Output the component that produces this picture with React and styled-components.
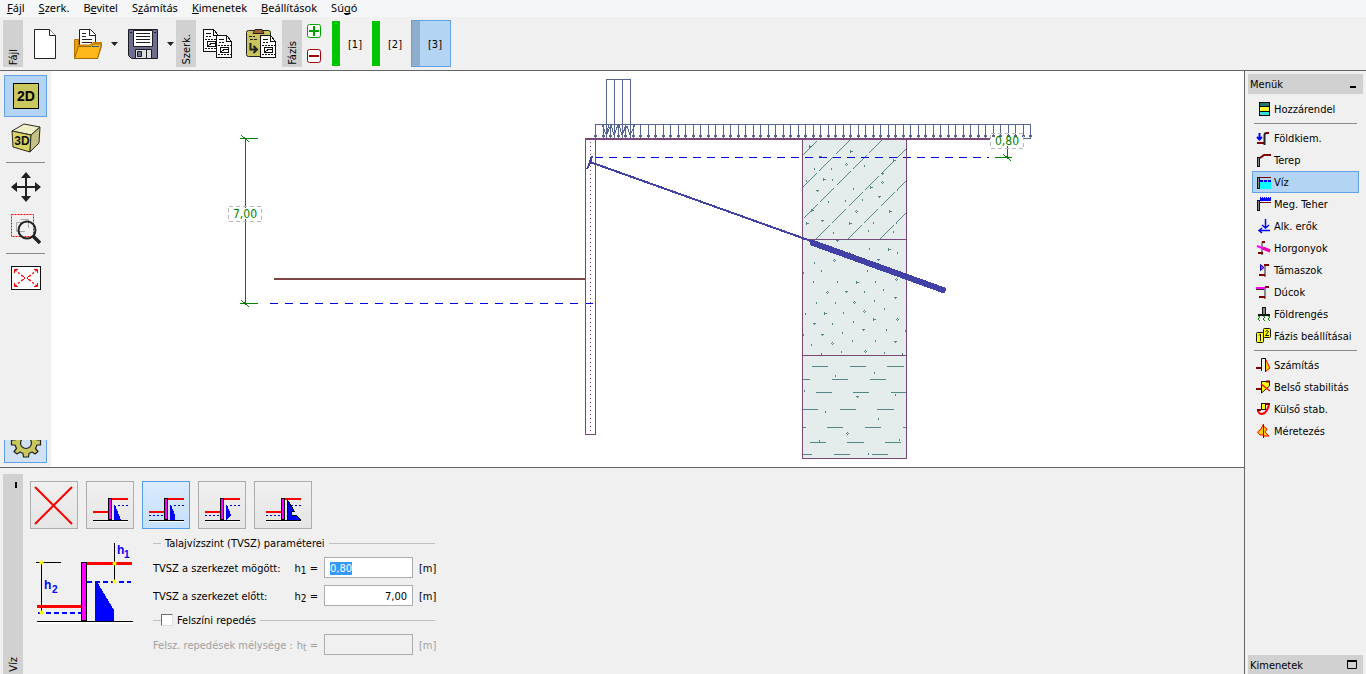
import React, { useEffect, useRef } from "react";
import styled, { createGlobalStyle, css } from "styled-components";

const c = {
  face: "#f0f0f0",
  strip: "#d1d1d1",
  line: "#646464",
  accent: "#b3d4f3",
  accentBorder: "#62a2e4",
  soil: "#e4edec",
  hatch: "#558686",
  purple: "#7b4678",
  load: "#566592",
  anchor: "#4040a6",
  water: "#0000e6",
  dim: "#008000",
};

const uiFont = `"DejaVu Sans Condensed", "Noto Sans", sans-serif`;

const GlobalStyle = createGlobalStyle`
  *, *::before, *::after { box-sizing: border-box; }
  body { margin: 0; font: 11px/14px ${uiFont}; color: #000; background: ${c.face}; }
  button, input { font: inherit; color: inherit; }
  svg { display: block; flex: none; }
`;

const Window = styled.div`
  display: flex;
  flex-direction: column;
  min-height: 100vh;
`;

const Caption = styled.span`
  padding-top: 2px;
`;

const MenuBar = styled.nav`
  display: flex;
  gap: 14px;
  height: 17px;
  padding: 0 7px;
  background: #f5f6f8;
  font: 11px/16px "Noto Sans", "Open Sans", sans-serif;
`;

const MenuLink = styled.a`
  color: #000;
  text-decoration: none;
  u {
    text-decoration-thickness: 1px;
    text-underline-offset: 1px;
    text-decoration-skip-ink: none;
  }
`;

const Toolbar = styled.header`
  display: flex;
  height: 54px;
  padding: 3px;
  border-bottom: 1px solid ${c.line};
`;

const StripLabel = styled.span`
  writing-mode: vertical-rl;
  transform: rotate(180deg);
  line-height: 18px;
  padding-top: 2px;
`;

const Strip = styled.div`
  display: flex;
  flex: none;
  flex-direction: column;
  align-items: flex-end;
  justify-content: flex-end;
  width: 20px;
  background: ${c.strip};
`;

const PlainButton = styled.button`
  display: flex;
  flex: none;
  align-items: center;
  justify-content: center;
  padding: 0;
  border: 0;
  background: none;
`;

const ToolButton = styled(PlainButton)`
  width: ${(p) => p.$width || 44}px;
`;

const PhaseEdit = styled.div`
  display: flex;
  flex-direction: column;
  align-items: center;
  justify-content: space-between;
  width: 24px;
  margin-right: 5px;
  padding: 4px 0;
`;

const Phase = styled.button`
  display: flex;
  align-items: stretch;
  width: 40px;
  padding: 0;
  border: 1px solid ${(p) => (p.$active ? c.accentBorder : "transparent")};
  background: ${(p) => (p.$active ? c.accent : "none")};
  &::before {
    content: "";
    width: 8px;
    background: ${(p) => (p.$active ? "#8faecd" : "#00c400")};
  }
`;

const PhaseName = styled(Caption)`
  flex: 1;
  align-self: center;
  text-align: center;
`;

const Body = styled.div`
  display: flex;
  flex: 1;
`;

const Workspace = styled.main`
  display: flex;
  flex: 1;
  flex-direction: column;
  min-width: 0;
`;

const ViewRow = styled.section`
  display: flex;
  flex: 1;
  min-height: 0;
`;

const ViewTools = styled.div`
  display: flex;
  flex: none;
  flex-direction: column;
  width: 51px;
  padding: 4px;
`;

const ViewButton = styled(PlainButton)`
  width: 43px;
  height: 42px;
  ${(p) =>
    p.$active &&
    css`
      border: 1px solid ${c.accentBorder};
      background: ${c.accent};
    `}
`;

const SettingsButton = styled(PlainButton)`
  align-items: flex-end;
  width: 43px;
  height: 23px;
  margin-top: auto;
  padding-bottom: 4px;
  overflow: hidden;
  border: 1px solid ${c.accentBorder};
  border-top: 0;
  background: #d0e1f3;
`;

const Rule = styled.hr`
  width: auto;
  height: 1px;
  margin: 3px 2px;
  border: 0;
  background: #8a8a8a;
`;

const Canvas = styled.div`
  display: flex;
  flex: 1;
  min-width: 0;
  background: #fff;
  svg { width: 100%; }
`;

const Panel = styled.section`
  display: flex;
  flex: none;
  gap: 7px;
  height: 207px;
  padding: 6px 3px 0;
  border-top: 1px solid ${c.line};
`;

const PanelStrip = styled(Strip)`
  justify-content: space-between;
  padding-top: 8px;
  &::before {
    content: "";
    width: 2px;
    height: 6px;
    margin-right: 6px;
    background: #000;
  }
`;

const PanelBody = styled.div`
  display: flex;
  flex-direction: column;
  gap: 7px;
  padding-top: 7px;
`;

const TypeRow = styled.div`
  display: flex;
  gap: 8px;
`;

const TypeButton = styled.button`
  display: flex;
  align-items: center;
  justify-content: center;
  width: ${(p) => (p.$wide ? 58 : 48)}px;
  height: 48px;
  padding: 0;
  border: 1px solid ${(p) => (p.$active ? "#569de5" : "#adadad")};
  background: ${(p) =>
    p.$active
      ? "linear-gradient(#daebfc, #c4e0fc)"
      : "linear-gradient(#f0f0f0, #e5e5e5)"};
`;

const Details = styled.div`
  display: flex;
  gap: 19px;
  padding-left: 6px;
`;

const Form = styled.form`
  display: flex;
  flex-direction: column;
  gap: 7px;
  width: 282px;
`;

const GroupTitle = styled.div`
  display: flex;
  align-items: center;
  gap: 4px;
  height: 14px;
  white-space: nowrap;
  &::before, &::after {
    content: "";
    height: 1px;
    background: #c0c0c0;
  }
  &::before { width: 8px; }
  &::after { flex: 1; }
`;

const CrackToggle = styled.label`
  display: flex;
  align-items: center;
  gap: 4px;
  margin-left: -4px;
`;

const CheckBox = styled.input`
  appearance: none;
  width: 12px;
  height: 12px;
  margin: 0;
  border: 1px solid;
  border-color: #6e6e6e #e0e0e0 #e0e0e0 #6e6e6e;
  background: #fff;
`;

const Field = styled.div`
  display: flex;
  align-items: center;
  height: 21px;
  color: ${(p) => (p.$muted ? "#a0a0a0" : "#000")};
`;

const FieldLabel = styled.label`
  display: flex;
  flex: none;
  justify-content: space-between;
  width: 165px;
  margin-right: 6px;
  padding-top: 2px;
  white-space: nowrap;
`;

const Sub = styled.sub`
  font-size: 10px;
  line-height: 1px;
  vertical-align: -2px;
`;

const NumberBox = styled.input`
  flex: none;
  width: 89px;
  height: 21px;
  margin-right: 6px;
  padding: 1px 5px 0;
  border: 1px solid #abadb3;
  border-radius: 0;
  outline: 0;
  background: ${(p) => (p.disabled ? "#f0f0f0" : "#fff")};
  text-align: ${(p) => (p.$align || "right")};
  &::selection { background: #3399ff; color: #fff; }
`;

const Sidebar = styled.aside`
  display: flex;
  flex: none;
  flex-direction: column;
  width: 122px;
  padding: 3px 3px 0;
  border-left: 1px solid ${c.line};
`;

const SideHeader = styled.h2`
  display: flex;
  align-items: center;
  justify-content: space-between;
  height: 20px;
  margin: 0;
  padding: 0 6px 0 2px;
  background: ${c.strip};
  font: inherit;
`;

const SideFooter = styled(SideHeader)`
  height: 19px;
  margin-top: auto;
`;

const SideList = styled.div`
  display: flex;
  flex-direction: column;
  padding: 4px;
`;

const SideItem = styled.button`
  display: flex;
  align-items: center;
  gap: 2px;
  height: 22px;
  padding: 0 3px;
  border: 1px solid ${(p) => (p.$active ? c.accentBorder : "transparent")};
  background: ${(p) => (p.$active ? c.accent : "none")};
  white-space: nowrap;
`;

/* ---------- toolbar icons ---------- */

const PageIcon = () => (
  <svg width="24" height="32" viewBox="0 0 24 32" fill="#fff" stroke="#222">
    <path d="M1.5 1.5H16.500L22.500 7.500V30.500H1.500Z" />
    <path d="M16.500 1.500V7.500H22.500" />
  </svg>
);

const OpenIcon = () => (
  <svg width="30" height="32" viewBox="0 0 30 32" stroke="#222">
    <path d="M6.500 22V1.500H17.500L22.500 6.500V22" fill="#fff" />
    <path d="M16.500 1.500V7.500H22.500M9 5.500H13M9 8.500H13M9 11.500H19M9 14.500H19" fill="none" />
    <path d="M1.500 30.500V11.500H5.500V17H17L20 14.500H28.500V18L24.500 30.500Z" fill="#e99f0c" stroke="#b87800" />
    <path d="M1.500 30.500L5.500 18.500H18L20.500 16H28.500L24.500 30.500Z" fill="#ffb81c" stroke="#a06c00" />
    <path d="M19 18.500H26" stroke="#2c5a90" />
  </svg>
);

const SaveIcon = () => (
  <svg width="32" height="32" viewBox="0 0 32 32" stroke="#1c1c24">
    <path d="M1.500 1.500H30.500V30.500H4.500L1.500 27.500Z" fill="#6d6d90" />
    <path d="M6.500 2.500H25.500V18.500H6.500Z" fill="#fff" />
    <path d="M9 5.500H23M9 8.500H23M9 11.500H23M9 14.500H23M3 4.500H5M27 4.500H29" />
    <path d="M8.500 21.500H24.500V30.500H8.500Z" fill="#dedede" />
    <path d="M10.500 23.500H14.500V28.500H10.500Z" fill="#6d6d90" />
    <path d="M19.500 22V30" />
  </svg>
);

const ArrowDown = () => (
  <svg width="7" height="4" viewBox="0 0 7 4">
    <path d="M0 0H7L3.500 4Z" fill="#222" />
  </svg>
);

const Sheet = ({ x, y }) => (
  <g transform={`translate(${x} ${y})`} stroke="#111" fill="none">
    <path d="M.5 .5H10.500L15.500 6.500V22.500H.5Z" fill="#fff" />
    <path d="M10.500 .5V6.500H15.500M3 4.500H8M3 7.500H5M6 7.500H8" />
    <path d="M2 10.500H15M2 19.500H15" strokeDasharray="2 1" />
    <path d="M4.500 12.500H12.500V17.500H4.500ZM5 17L8 14.500H12" />
  </g>
);

const CopyIcon = () => (
  <svg width="32" height="32" viewBox="0 0 32 32" shapeRendering="crispEdges">
    <Sheet x={1} y={1} />
    <Sheet x={14} y={7} />
  </svg>
);

const PasteIcon = () => (
  <svg width="32" height="32" viewBox="0 0 32 32" stroke="#222">
    <rect x="1.500" y="2.500" width="24" height="26" rx="2" fill="#c9c45c" />
    <path d="M8 5.500L10 1.500H17L19 5.500Z" fill="#a06030" />
    <path d="M4 8.500H10M5 11.500H13" strokeDasharray="3 1" fill="none" />
    <path d="M5.500 15V21.500H11M8.500 18L12 21.500L8.500 25" fill="none" strokeWidth="2" />
    <g shapeRendering="crispEdges"><Sheet x={15} y={7} /></g>
  </svg>
);

const SignIcon = ({ plus }) => {
  const color = plus ? "#00a000" : "#a00010";
  return (
    <svg width="14" height="14" viewBox="0 0 14 14" fill="none" stroke={color}>
      <rect x=".5" y=".5" width="13" height="13" rx="2" fill="#fff" />
      <path d={plus ? "M2 7H12M7 2V12" : "M2 7H12"} strokeWidth="2" />
    </svg>
  );
};

/* ---------- view icons ---------- */

const boldFont = `"Liberation Sans", Arial, sans-serif`;

const Icon2D = () => (
  <svg width="26" height="26" viewBox="0 0 26 26">
    <rect x=".5" y=".5" width="25" height="25" fill="#c9c75e" stroke="#000" />
    <text x="13" y="18" textAnchor="middle" fontFamily={boldFont} fontWeight="700" fontSize="14">2D</text>
  </svg>
);

const Icon3D = () => (
  <svg width="30" height="30" viewBox="0 0 30 30" stroke="#2a2a20" strokeLinejoin="round">
    <path d="M1 8L13 1L29 4L20 12Z" fill="#eeeec8" />
    <path d="M1 8L20 12L19 29L2 24Z" fill="#d8d564" />
    <path d="M20 12L29 4L28 20L19 29Z" fill="#c4c084" />
    <text x="11" y="22" textAnchor="middle" fontFamily={boldFont} fontWeight="700" fontSize="12" fill="#111" stroke="none">3D</text>
  </svg>
);

const MoveIcon = () => (
  <svg width="30" height="30" viewBox="0 0 30 30" fill="#222">
    <path d="M14 5H16V14H25V16H16V25H14V16H5V14H14Z" />
    <path d="M15 0L20 6H10ZM15 30L10 24H20ZM0 15L6 10V20ZM30 15L24 20V10Z" />
  </svg>
);

const ZoomIcon = () => (
  <svg width="30" height="30" viewBox="0 0 30 30" fill="none">
    <rect x=".5" y=".5" width="22" height="22" stroke="#f00" strokeDasharray="2 1" />
    <path d="M9.500 5.500H17.500V14M5.500 8.500H14M5.500 8.500V17.500H14" stroke="#aaa" />
    <circle cx="16" cy="16" r="8.500" stroke="#222" strokeWidth="2" />
    <path d="M22 22L29 29" stroke="#222" strokeWidth="3.500" />
  </svg>
);

const FitIcon = () => (
  <svg width="30" height="24" viewBox="0 0 30 24" fill="none" stroke="#f00">
    <rect x=".5" y=".5" width="29" height="23" fill="#fff" stroke="#111" />
    <path d="M3.500 7V3.500H7M23 3.500H26.500V7M3.500 17V20.500H7M23 20.500H26.500V17" />
    <path d="M4 4L12 10.500M26 4L18 10.500M4 20L12 13.500M26 20L18 13.500" strokeDasharray="2 2" strokeWidth="1.500" />
    <path d="M12 10L14 12L12 14M18 10L16 12L18 14" />
  </svg>
);

const GearIcon = () => (
  <svg width="32" height="30" viewBox="-16 -15 32 30" stroke="#222" strokeWidth="1.200">
    <path
      fill="#c9c75e"
      strokeLinejoin="round"
      d="M-2.500 -14H2.500L3 -10.500L6.500 -9L9.500 -11.500L12.500 -8L10 -5L11 -3H14.500V2H11L9.500 5.500L12 8.500L9 11L6 9L3 10.500L2.500 14H-2.500L-3 10.500L-6 9L-9 11L-12 8.500L-9.500 5.500L-11 2H-14.500V-3H-11L-10 -5L-12.500 -8L-9.500 -11.500L-6.500 -9L-3 -10.500Z"
    />
    <circle r="5.500" fill="#d0e1f3" />
  </svg>
);

/* ---------- groundwater type icons ---------- */

const NoWaterIcon = () => (
  <svg width="40" height="40" viewBox="0 0 40 40" stroke="#f00" strokeWidth="2">
    <path d="M1 2L38 39M38 2L1 39" />
  </svg>
);

const WaterIcon = ({ shape, front, outlined }) => (
  <svg width="36" height="36" viewBox="-1 1 36 36" shapeRendering="crispEdges">
    <rect x="0" y="35" width="35" height="1" fill="#fff" />
    <rect x="0" y="34" width="35" height="1" fill="#000" />
    <rect x="0" y="25" width="16" height="2" fill="#f00" />
    <rect x="18" y="12" width="17" height="2" fill="#f00" />
    <path d="M25 19.500H35" stroke="#0000c8" strokeDasharray="2 2" />
    {front && <path d="M0 29.500H15" stroke="#0000c8" strokeDasharray="2 2" />}
    <path d={shape} fill="#00f" stroke={outlined ? "#000" : "none"} />
    <rect x="15.500" y="12.500" width="3" height="21" fill="#f0f" stroke="#000" />
  </svg>
);

const waterTypes = [
  { name: "Víz mögött", shape: "M21 19H22L28 34H21Z" },
  { name: "Víz mögött és előtt", shape: "M21 19H22L26 29V34H21Z", front: true, active: true },
  { name: "Áramlás", shape: "M21 19H22L26 29L22 34H21Z", front: true },
  { name: "Egyedi nyomás", shape: "M21.500 14V34H35L30 29H25V25H28L26 21Z", front: true, outlined: true, wide: true },
];

const WaterSketch = () => (
  <svg width="98" height="90" viewBox="36 536 98 90" fontFamily={boldFont} fontWeight="700">
    <g shapeRendering="crispEdges">
      <path d="M37 622V624H133V622Z" fill="#fff" />
      <path d="M36 562.500H61M41.500 562V612M114.500 543V581M37 621.500H133" stroke="#000" />
      <rect x="37" y="605" width="45" height="3" fill="#f00" />
      <rect x="87" y="562" width="45" height="3" fill="#f00" />
      <path d="M38 613H81M87 582H131" stroke="#00f" strokeWidth="2" strokeDasharray="5 3" />
      <path d="M95 582H97L114 610V621H95Z" fill="#00f" />
      <rect x="81.500" y="562.500" width="5" height="58" fill="#f0f" stroke="#000" />
    </g>
    <g fill="#ff0">
      <circle cx="41.500" cy="562.500" r="2" />
      <circle cx="41.500" cy="612.500" r="2" />
      <circle cx="114.500" cy="563.500" r="2" />
      <circle cx="114.500" cy="581.500" r="2" />
    </g>
    <g fill="#00f">
      <text x="117" y="554" fontSize="12">h</text>
      <text x="124" y="558" fontSize="10">1</text>
      <text x="44" y="589" fontSize="12">h</text>
      <text x="52" y="593" fontSize="10">2</text>
    </g>
  </svg>
);

/* ---------- side menu icons ---------- */

const sideIcons = {
  assign: (
    <>
      <rect x="3" y="1" width="11" height="14" fill="#000" />
      <rect x="4" y="2" width="9" height="3" fill="#1d7a74" />
      <rect x="4" y="6" width="9" height="4" fill="#ff3" />
      <rect x="4" y="11" width="9" height="3" fill="#3dd" />
    </>
  ),
  excavation: (
    <>
      <path d="M1 13H9" stroke="#800000" strokeWidth="2" />
      <path d="M8.500 15V5Q8.500 3 11 3" stroke="#222" strokeWidth="2" />
      <path d="M10 3H13" stroke="#800000" strokeWidth="2" />
      <path d="M3.500 3V10M1 7L3.500 9.500L6 7" stroke="#00f" strokeWidth="2" />
    </>
  ),
  terrain: (
    <>
      <rect x="1.500" y="5.500" width="2" height="9" fill="#888" stroke="#111" />
      <path d="M4 6L8 3H15" stroke="#800000" strokeWidth="2" />
    </>
  ),
  water: (
    <>
      <rect x="4" y="6" width="11" height="9" fill="#0ff" />
      <path d="M4 3.500H15" stroke="#800000" />
      <path d="M4 7H15" stroke="#00f" strokeWidth="2" strokeDasharray="3 1" />
      <rect x="1.500" y="3.500" width="2" height="11" fill="#888" stroke="#111" />
    </>
  ),
  surcharge: (
    <>
      <path d="M4 5V1H5V2H6V1H7V2H8V1H9V2H10V1H11V2H12V1H13V2H14V1H15V5Z" fill="#00f" />
      <path d="M4 6.500H15" stroke="#800000" />
      <rect x="1.500" y="4.500" width="2" height="10" fill="#888" stroke="#111" />
    </>
  ),
  forces: (
    <path d="M9.500 1V10M6 7L9.500 10L13 7M14 12.500H3M6 10L3 12.500L6 15" stroke="#00f" strokeWidth="1.500" />
  ),
  anchors: (
    <>
      <path d="M9 2H7Q6 2 6 5V15" stroke="#888" strokeWidth="2" />
      <path d="M6 2H9M2 13H7" stroke="#800000" strokeWidth="2" />
      <path d="M1 6L14 11" stroke="#f0f" strokeWidth="2" />
      <path d="M7 8L14 11" stroke="#e0a" strokeWidth="3" />
    </>
  ),
  supports: (
    <>
      <path d="M9 15V3" stroke="#888" strokeWidth="2" />
      <path d="M8 3H13M3 13H9" stroke="#800000" strokeWidth="2" />
      <path d="M4.500 2.500L8 5.500L4.500 8.500Z" fill="#f0f" stroke="#00c" />
    </>
  ),
  struts: (
    <>
      <path d="M9 15V3" stroke="#888" strokeWidth="2" />
      <path d="M9 3H13M3 13H9" stroke="#800000" strokeWidth="2" />
      <path d="M0 4H9" stroke="#f0f" strokeWidth="2" />
      <path d="M0 5.500H8" stroke="#333" />
    </>
  ),
  quake: (
    <>
      <rect x="6.500" y="1.500" width="3" height="7" fill="#888" stroke="#111" />
      <path d="M2 9H14" stroke="#111" strokeWidth="2" />
      <path d="M2 10L4 11L2 13L4 15M7 10L9 11L7 13L9 15M12 10L14 11L12 13L14 15" stroke="#080" />
    </>
  ),
  stages: (
    <>
      <rect x="7.500" y=".5" width="7" height="9" rx="1" fill="#ff0" stroke="#111" />
      <rect x=".5" y="4.500" width="7" height="10" rx="1" fill="#ff0" stroke="#111" />
      <path d="M3 7.500L4.500 6V13M9.500 3.500Q11 1.500 12.500 3.500L9.500 7.500H13" stroke="#111" />
    </>
  ),
  analysis: (
    <>
      <path d="M5.500 14V1.500H9.500V15" stroke="#111" />
      <path d="M0 11H5" stroke="#800000" strokeWidth="2" />
      <path d="M9.500 2L14 11L9.500 14.500" fill="#fc0" stroke="#f00" />
      <path d="M9.500 1V15" stroke="#111" />
    </>
  ),
  internal: (
    <>
      <path d="M5.500 2.500H13.500V7L5.500 14Z" fill="#ff0" stroke="#111" />
      <path d="M5 5L14 12" stroke="#f00" strokeWidth="1.500" />
      <path d="M0 10H5M10 2.500H14" stroke="#800000" strokeWidth="2" />
    </>
  ),
  external: (
    <>
      <path d="M2 9C2 15 11 15 13 3" stroke="#f00" strokeWidth="2" />
      <path d="M1 9H5M9 3H14" stroke="#800000" strokeWidth="2" />
      <rect x="5.500" y="2.500" width="4" height="6" fill="#ff0" stroke="#111" />
    </>
  ),
  design: (
    <>
      <path d="M7.500 1L5 6L1.500 9L4 12H7.500Z" fill="#fc0" stroke="#f00" />
      <path d="M7.500 3L11 6L9 9L13 13H7.500Z" fill="#fc0" stroke="#f00" />
      <path d="M7.500 2V15" stroke="#a00" />
    </>
  ),
};

const SideIcon = ({ name }) => (
  <svg width="16" height="16" viewBox="0 0 16 16" fill="none">{sideIcons[name]}</svg>
);

const stageItems = [
  ["excavation", "Földkiem."],
  ["terrain", "Terep"],
  ["water", "Víz"],
  ["surcharge", "Meg. Teher"],
  ["forces", "Alk. erők"],
  ["anchors", "Horgonyok"],
  ["supports", "Támaszok"],
  ["struts", "Dúcok"],
  ["quake", "Földrengés"],
  ["stages", "Fázis beállításai"],
];

const analysisItems = [
  ["analysis", "Számítás"],
  ["internal", "Belső stabilitás"],
  ["external", "Külső stab."],
  ["design", "Méretezés"],
];

/* ---------- wall cross-section ---------- */

const soilDiagonals = [
  [803, 155, 819, 139], [803, 187, 851, 139], [804, 218, 883, 139],
  [816, 239, 906, 149], [848, 239, 906, 181], [880, 239, 906, 213],
];
const soilTees = [
  [820, 157], [817, 191], [822, 221], [882, 174], [879, 197], [837, 241], [878, 260],
  [846, 292], [895, 298], [814, 324], [863, 330], [822, 335], [895, 342], [857, 397],
];
const soilForks = [
  [810, 146], [824, 179], [812, 210], [807, 223], [850, 223], [851, 151], [871, 187],
  [890, 211], [894, 160], [889, 249], [857, 282], [825, 313], [874, 319],
];
const soilPebbles = [
  [846, 164], [882, 182], [856, 211], [834, 260], [896, 279], [827, 292],
  [854, 302], [864, 311], [897, 319], [832, 343], [865, 351], [847, 433],
];
const soilTicks = [
  [814, 169], [831, 169], [845, 201], [832, 180], [853, 189], [806, 181], [864, 166],
  [862, 200], [873, 223], [833, 233], [868, 231], [893, 232], [896, 223], [897, 190],
  [828, 202], [869, 249], [849, 253], [897, 253], [814, 263], [803, 273], [821, 271],
  [867, 271], [887, 272], [813, 282], [837, 282], [875, 282], [864, 292], [883, 290],
  [816, 303], [835, 303], [874, 301], [884, 309], [843, 313], [805, 314], [853, 322],
  [832, 324], [886, 330], [842, 333], [905, 331], [852, 341], [875, 341], [811, 345],
  [841, 352], [884, 353], [821, 354], [803, 335], [902, 354], [835, 376], [874, 373],
  [804, 391], [895, 395], [825, 412], [878, 419], [899, 440], [868, 454], [819, 441],
];
const clayDashes = [
  [366, 812, 828], [366, 850, 866], [366, 887, 904],
  [379, 803, 810], [379, 832, 848], [379, 870, 886],
  [392, 816, 832], [392, 853, 869], [392, 891, 906],
  [409, 803, 818], [409, 840, 856], [409, 877, 894],
  [427, 803, 806], [427, 827, 843], [427, 865, 881], [427, 903, 906],
  [442, 810, 826], [442, 847, 864], [442, 885, 901],
  [454, 803, 812], [454, 834, 850], [454, 872, 888],
];

const loadArrows = Array.from({ length: 59 }, (_, i) => Math.round(595 + i * 7.5));

const join = (items, draw) => items.map(draw).join("");

const Slash = ({ x, y }) => (
  <path d={`M${x - 4} ${y - 3}L${x + 4} ${y + 4}`} stroke={c.dim} />
);

const Section = () => (
  <svg viewBox="51 71 1193 396" fill="none" role="img" aria-label="Szerkezet metszete">
    <g shapeRendering="crispEdges">
      <rect x="802" y="138" width="105" height="321" fill={c.soil} />
      <g stroke={c.hatch}>
        <path d={join(soilDiagonals, ([a, b, d, e]) => `M${a} ${b}L${d} ${e}`)} strokeDasharray="20 3" />
        <path d={join(soilTicks, ([x, y]) => `M${x + 0.5} ${y - 1}V${y + 1}`)} />
        <path d={join(soilTees, ([x, y]) => `M${x - 1} ${y - 0.5}H${x + 2}M${x + 0.5} ${y}V${y + 1}`)} />
        <path d={join(soilForks, ([x, y]) => `M${x - 0.5} ${y - 1}V${y + 2}M${x} ${y + 0.5}H${x + 2}`)} />
        <path d={join(soilPebbles, ([x, y]) => `M${x + 1} ${y + 0.5}h1M${x - 1} ${y + 0.5}h1M${x} ${y - 0.5}h1M${x} ${y + 1.5}h1`)} />
        <path d={join(clayDashes, ([y, a, b]) => `M${a} ${y + 0.5}H${b}`)} />
      </g>

      <g stroke={c.load}>
        <path d="M606.500 138V79.500H630.500V138M614.500 79V138M622.500 79V138" />
        <path d="M595.500 138V124.500H1030.500V138.500H990" />
        <path d={join(loadArrows, (x) => `M${x + 0.5} 124V138M${x - 1} 136.500h3M${x - 1} 135.500h3`)} />
        <path d="M602 125L606 134L609 125M606 136L611 125L614 135L618 125M613 135L619 125L622 135L626 125M621 135L627 126L630 135L635 125" />
      </g>

      <path d="M595 157.500H989" stroke={c.water} strokeDasharray="8 6" />
      <path d="M270 303.500H596" stroke={c.water} strokeDasharray="8 7" />
      <rect x="274" y="278" width="312" height="2" fill="#7b4445" />

      <g stroke={c.purple}>
        <path d="M595 138.500H585.500V434.500H595.500V138" />
        <path d="M590.500 142V434" strokeDasharray="1 3" />
        <path d="M585 139H990" strokeWidth="2" />
        <path d="M802.500 139V458.500H906.500V139M802 239.500H906M802 355.500H906" />
      </g>

      <g stroke={c.anchor}>
        <path d="M587 169L589 165L592 156M590 162L811 241" strokeWidth="2" />
        <path d="M813 243L943 290" strokeWidth="6" strokeLinecap="round" />
      </g>

      <g stroke={c.dim}>
        <path d="M245.500 138V304M240 138.500H258M240 303.500H258M1007.500 146V157M995 157.500H1012" />
        <Slash x={245} y={138} />
        <Slash x={245} y={303} />
        <Slash x={1007} y={157} />
      </g>

      <rect x="229" y="208" width="33" height="11" fill="#fff" />
      <rect x="991" y="137" width="32" height="9" fill="#fff" />
      <g stroke="#b8b8b8" strokeDasharray="4 3">
        <rect x="228.500" y="206.500" width="33" height="15" />
        <rect x="990.500" y="133.500" width="33" height="15" />
      </g>
    </g>
    <g fill={c.dim} fontFamily={uiFont} fontSize="12" textAnchor="middle">
      <text x="245" y="218">7,00</text>
      <text x="1007" y="145">0,80</text>
    </g>
  </svg>
);

export default function App() {
  const depth = useRef(null);

  useEffect(() => {
    depth.current.focus();
    depth.current.select();
  }, []);

  return (
    <Window>
      <GlobalStyle />
      <MenuBar>
        <MenuLink href="#"><u>F</u>ájl</MenuLink>
        <MenuLink href="#"><u>S</u>zerk.</MenuLink>
        <MenuLink href="#">B<u>e</u>vitel</MenuLink>
        <MenuLink href="#">S<u>z</u>ámítás</MenuLink>
        <MenuLink href="#"><u>K</u>imenetek</MenuLink>
        <MenuLink href="#"><u>B</u>eállítások</MenuLink>
        <MenuLink href="#">Sú<u>g</u>ó</MenuLink>
      </MenuBar>

      <Toolbar>
        <Strip><StripLabel>Fájl</StripLabel></Strip>
        <ToolButton aria-label="Új"><PageIcon /></ToolButton>
        <ToolButton $width={42} aria-label="Megnyitás"><OpenIcon /></ToolButton>
        <ToolButton $width={11} aria-label="Legutóbbi fájlok"><ArrowDown /></ToolButton>
        <ToolButton $width={45} aria-label="Mentés"><SaveIcon /></ToolButton>
        <ToolButton $width={11} aria-label="Mentés másként"><ArrowDown /></ToolButton>
        <Strip><StripLabel>Szerk.</StripLabel></Strip>
        <ToolButton aria-label="Másolás"><CopyIcon /></ToolButton>
        <ToolButton $width={42} aria-label="Beillesztés"><PasteIcon /></ToolButton>
        <Strip><StripLabel>Fázis</StripLabel></Strip>
        <PhaseEdit>
          <PlainButton aria-label="Fázis hozzáadása"><SignIcon plus /></PlainButton>
          <PlainButton aria-label="Fázis törlése"><SignIcon /></PlainButton>
        </PhaseEdit>
        <Phase><PhaseName>[1]</PhaseName></Phase>
        <Phase><PhaseName>[2]</PhaseName></Phase>
        <Phase $active><PhaseName>[3]</PhaseName></Phase>
      </Toolbar>

      <Body>
        <Workspace>
          <ViewRow>
            <ViewTools>
              <ViewButton $active aria-label="2D nézet"><Icon2D /></ViewButton>
              <ViewButton aria-label="3D nézet"><Icon3D /></ViewButton>
              <Rule />
              <ViewButton aria-label="Mozgatás"><MoveIcon /></ViewButton>
              <ViewButton aria-label="Nagyítás"><ZoomIcon /></ViewButton>
              <Rule />
              <ViewButton aria-label="Teljes nézet"><FitIcon /></ViewButton>
              <SettingsButton aria-label="Rajz beállításai"><GearIcon /></SettingsButton>
            </ViewTools>
            <Canvas><Section /></Canvas>
          </ViewRow>

          <Panel>
            <PanelStrip><StripLabel>Víz</StripLabel></PanelStrip>
            <PanelBody>
              <TypeRow>
                <TypeButton aria-label="Nincs víz"><NoWaterIcon /></TypeButton>
                {waterTypes.map((t) => (
                  <TypeButton key={t.name} aria-label={t.name} $active={t.active} $wide={t.wide}>
                    <WaterIcon shape={t.shape} front={t.front} outlined={t.outlined} />
                  </TypeButton>
                ))}
              </TypeRow>
              <Details>
                <WaterSketch />
                <Form>
                  <GroupTitle><Caption>Talajvízszint (TVSZ) paraméterei</Caption></GroupTitle>
                  <Field>
                    <FieldLabel htmlFor="h1">
                      <span>TVSZ a szerkezet mögött:</span>
                      <span>h<Sub>1</Sub> =</span>
                    </FieldLabel>
                    <NumberBox id="h1" ref={depth} defaultValue="0,80" $align="left" />
                    <Caption>[m]</Caption>
                  </Field>
                  <Field>
                    <FieldLabel htmlFor="h2">
                      <span>TVSZ a szerkezet előtt:</span>
                      <span>h<Sub>2</Sub> =</span>
                    </FieldLabel>
                    <NumberBox id="h2" defaultValue="7,00" />
                    <Caption>[m]</Caption>
                  </Field>
                  <GroupTitle>
                    <CrackToggle>
                      <CheckBox type="checkbox" />
                      <Caption>Felszíni repedés</Caption>
                    </CrackToggle>
                  </GroupTitle>
                  <Field $muted>
                    <FieldLabel htmlFor="ht">
                      <span>Felsz. repedések mélysége :</span>
                      <span>h<Sub>t</Sub> =</span>
                    </FieldLabel>
                    <NumberBox id="ht" disabled />
                    <Caption>[m]</Caption>
                  </Field>
                </Form>
              </Details>
            </PanelBody>
          </Panel>
        </Workspace>

        <Sidebar>
          <SideHeader>
            <Caption>Menük</Caption>
            <svg width="8" height="10" viewBox="0 0 8 10"><rect x="1" y="7" width="6" height="2" /></svg>
          </SideHeader>
          <SideList>
            <SideItem><SideIcon name="assign" /><Caption>Hozzárendel</Caption></SideItem>
            <Rule />
            {stageItems.map(([icon, label]) => (
              <SideItem key={icon} $active={icon === "water"}>
                <SideIcon name={icon} /><Caption>{label}</Caption>
              </SideItem>
            ))}
            <Rule />
            {analysisItems.map(([icon, label]) => (
              <SideItem key={icon}><SideIcon name={icon} /><Caption>{label}</Caption></SideItem>
            ))}
          </SideList>
          <SideFooter>
            <Caption>Kimenetek</Caption>
            <svg width="10" height="9" viewBox="0 0 10 9" fill="none" stroke="#000">
              <path d="M.5 0V8.500H9.500V0" /><path d="M0 1H10" strokeWidth="2" />
            </svg>
          </SideFooter>
        </Sidebar>
      </Body>
    </Window>
  );
}
